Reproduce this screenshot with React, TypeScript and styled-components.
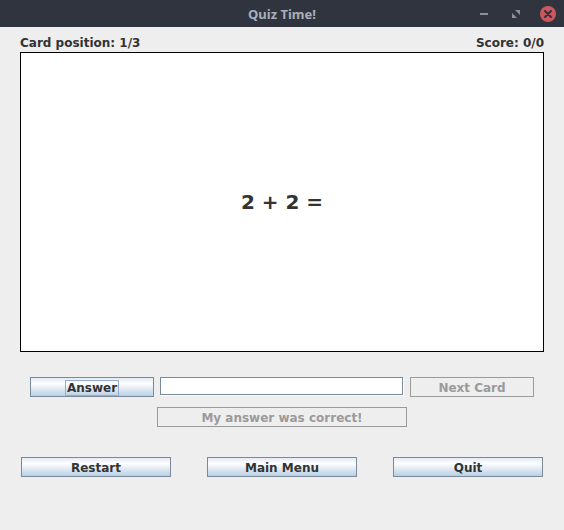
import * as React from "react";
import styled, { createGlobalStyle } from "styled-components";

const GlobalStyle = createGlobalStyle`
  html, body {
    margin: 0;
    padding: 0;
    background: #eeeeee;
  }
  * {
    box-sizing: border-box;
  }
`;

const Window = styled.div`
  width: 564px;
  height: 530px;
  display: flex;
  flex-direction: column;
  background: #eeeeee;
  font-family: "DejaVu Sans", "Liberation Sans", sans-serif;
  overflow: hidden;
`;

const TitleBar = styled.div`
  height: 27px;
  background: #2f343f;
  display: grid;
  grid-template-columns: 1fr auto 1fr;
  align-items: center;
`;

const Title = styled.div`
  grid-column: 2;
  font-family: "Noto Sans", "DejaVu Sans", sans-serif;
  font-weight: 700;
  font-size: 13px;
  color: #a9afb9;
  padding-top: 1px;
`;

const Controls = styled.div`
  grid-column: 3;
  justify-self: end;
  display: flex;
  align-items: center;
  gap: 14px;
  padding-right: 7px;
`;

const ControlSlot = styled.div`
  width: 18px;
  height: 18px;
  display: flex;
  align-items: center;
  justify-content: center;
`;

const Content = styled.div`
  flex: 1;
  display: flex;
  flex-direction: column;
  padding: 9px 20px 0 20px;
`;

const InfoRow = styled.div`
  display: flex;
  justify-content: space-between;
  font-size: 12px;
  font-weight: 700;
  color: #333333;
  line-height: 14px;
  height: 16px;
`;

const Card = styled.div`
  height: 300px;
  border: 1px solid #000000;
  background: #ffffff;
  display: flex;
  align-items: center;
  justify-content: center;
  font-size: 20px;
  font-weight: 700;
  color: #333333;
`;

const Row = styled.div<{ $top: number; $spread?: boolean }>`
  display: flex;
  align-items: center;
  justify-content: ${(p) => (p.$spread ? "space-between" : "center")};
  gap: 6px;
  margin-top: ${(p) => p.$top}px;
  padding: ${(p) => (p.$spread ? "0 1px" : "0")};
`;

const Button = styled.button<{ $w: number }>`
  width: ${(p) => p.$w}px;
  height: 20px;
  padding: 1px 0 0 0;
  margin: 0;
  border: 1px solid #7a8a99;
  border-radius: 0;
  background: linear-gradient(
    to bottom,
    #e1eaf4 0%,
    #ffffff 30%,
    #e6eef6 55%,
    #b8cfe5 100%
  );
  font-family: "DejaVu Sans", "Liberation Sans", sans-serif;
  font-size: 12px;
  font-weight: 700;
  color: #333333;
  display: flex;
  align-items: center;
  justify-content: center;
  cursor: pointer;

  &:disabled {
    background: #eeeeee;
    border-color: #9a9a9a;
    color: #9a9a9a;
    cursor: default;
  }
`;

const FocusRing = styled.span`
  border: 1px solid #99aecc;
  padding: 0 1px;
  line-height: 14px;
`;

const Field = styled.input`
  width: 243px;
  height: 18px;
  margin: 0 1px 2px 0;
  padding: 0 2px;
  border: 1px solid #7a8a99;
  box-shadow: 1px 1px 0 #ffffff;
  background: #ffffff;
  outline: none;
  font-family: "DejaVu Sans", sans-serif;
  font-size: 12px;
`;

function MinimizeIcon() {
  return (
    <svg width="10" height="10" viewBox="0 0 10 10">
      <rect x="1" y="4" width="8" height="2" fill="#8a919c" />
    </svg>
  );
}

function MaximizeIcon() {
  return (
    <svg width="10" height="10" viewBox="0 0 10 10">
      <path d="M4 1 L9 1 L9 6 Z" fill="#8a919c" />
      <path d="M1 4 L6 9 L1 9 Z" fill="#8a919c" />
    </svg>
  );
}

function CloseIcon() {
  return (
    <svg width="18" height="18" viewBox="0 0 18 18">
      <circle cx="9" cy="9" r="8" fill="#cc575d" />
      <path
        d="M6 6 L12 12 M12 6 L6 12"
        stroke="#2f343f"
        strokeWidth="2"
        strokeLinecap="round"
      />
    </svg>
  );
}

export default function App() {
  const [answer, setAnswer] = React.useState("");

  return (
    <Window>
      <GlobalStyle />
      <TitleBar>
        <Title>Quiz Time!</Title>
        <Controls>
          <ControlSlot>
            <MinimizeIcon />
          </ControlSlot>
          <ControlSlot>
            <MaximizeIcon />
          </ControlSlot>
          <ControlSlot>
            <CloseIcon />
          </ControlSlot>
        </Controls>
      </TitleBar>
      <Content>
        <InfoRow>
          <span>Card position: 1/3</span>
          <span>Score: 0/0</span>
        </InfoRow>
        <Card>2 + 2 =</Card>
        <Row $top={25}>
          <Button $w={124}>
            <FocusRing>Answer</FocusRing>
          </Button>
          <Field value={answer} onChange={(e) => setAnswer(e.target.value)} />
          <Button $w={124} disabled>
            Next Card
          </Button>
        </Row>
        <Row $top={10}>
          <Button $w={250} disabled>
            My answer was correct!
          </Button>
        </Row>
        <Row $top={30} $spread>
          <Button $w={150}>Restart</Button>
          <Button $w={150}>Main Menu</Button>
          <Button $w={150}>Quit</Button>
        </Row>
      </Content>
    </Window>
  );
}
